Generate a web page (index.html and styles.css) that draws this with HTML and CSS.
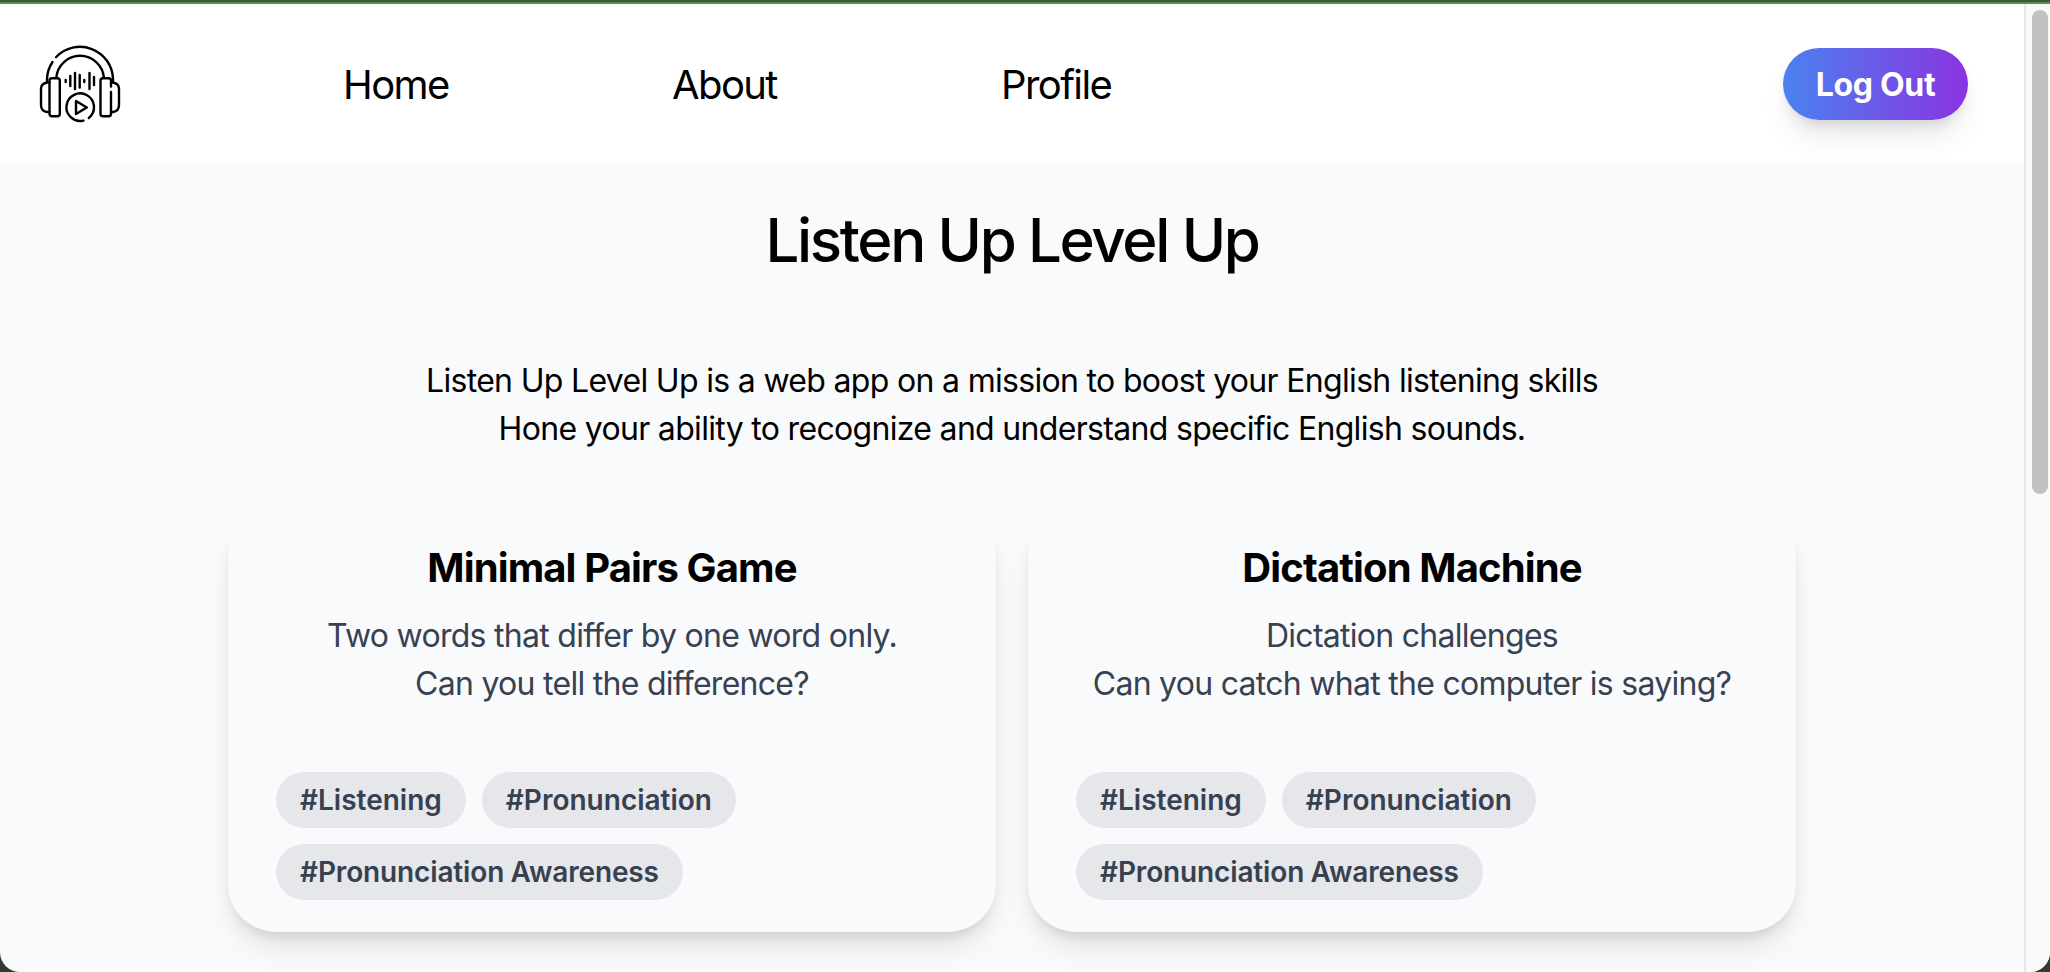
FILE: index.html
```html
<!DOCTYPE html>
<html lang="en">
<head>
<meta charset="utf-8">
<title>Listen Up Level Up</title>
<link rel="stylesheet" href="styles.css">
</head>
<body>
<div class="strip"></div>
<div class="window">
  <div class="page">
    <header class="nav">
      <svg class="logo" viewBox="0 0 120 110" fill="none" stroke="#000" stroke-width="2.4" stroke-linecap="round" stroke-linejoin="round">
        <path d="M27 51V49A33 33 0 0 1 32.500 32M36 27.200A33 33 0 0 1 93 49V51.500M36.300 47.500A23.900 23.900 0 0 1 83.900 47.500"/>
        <rect x="29.500" y="48.200" width="10.300" height="38" rx="2.500"/>
        <path d="M29.500 52.500H27Q21 53.500 21 59V75Q21 81 27 82H29.500"/>
        <path d="M91 62V84Q91 86.200 88.500 86.200H83Q80.500 86.200 80.500 84V50.500Q80.500 48.200 83 48.200H88.500Q91 48.200 91 50.500V56.500M91.500 52.500H93Q99 53.500 99 59V75Q99 81 93 82H91"/>
        <path d="M45.700 50V52M50.300 46V56M55 43V59M59.700 45V57.500M64.300 50V52M69.500 43V59M74 47V55"/>
        <path d="M63.500 90.600A13.800 13.800 0 1 1 68.800 88"/>
        <path d="M56 71V84L66.800 77.500Z"/>
      </svg>
      <nav class="links">
        <a class="link">Home</a><a class="link">About</a><a class="link">Profile</a>
      </nav>
      <button class="logout">Log Out</button>
    </header>
    <main class="main">
      <h1 class="title">Listen Up Level Up</h1>
      <p class="intro">Listen Up Level Up is a web app on a mission to boost your English listening skills<br>Hone your ability to recognize and understand specific English sounds.</p>
      <section class="cards">
        <article class="card">
          <h2 class="card-title">Minimal Pairs Game</h2>
          <p class="card-text">Two words that differ by one word only.<br>Can you tell the difference?</p>
          <div class="tags"><span class="tag">#Listening</span><span class="tag">#Pronunciation</span><span class="tag tag-long">#Pronunciation Awareness</span></div>
        </article>
        <article class="card">
          <h2 class="card-title">Dictation Machine</h2>
          <p class="card-text">Dictation challenges<br>Can you catch what the computer is saying?</p>
          <div class="tags"><span class="tag">#Listening</span><span class="tag">#Pronunciation</span><span class="tag tag-long">#Pronunciation Awareness</span></div>
        </article>
      </section>
    </main>
  </div>
  <div class="scrollbar"><div class="thumb"></div></div>
</div>
</body>
</html>
```

FILE: styles.css
```css
* { box-sizing: border-box; margin: 0; padding: 0; }
body {
  height: 972px;
  overflow: hidden;
  display: flex;
  flex-direction: column;
  background: #2f3b33;
  color: #000;
  font-family: Inter, "Liberation Sans", sans-serif;
}
.strip { flex: none; height: 4px; background: #38602f; border-bottom: 2px solid #5f8559; }
.window {
  flex: 1;
  min-height: 0;
  display: flex;
  overflow: hidden;
  background: #f9fafc;
  border-radius: 0 0 20px 20px;
}
.page { flex: 1; overflow: hidden; }
.nav {
  height: 160px;
  padding: 0 56px 0 20px;
  display: flex;
  align-items: center;
  background: #fff;
}
.logo { width: 120px; height: 110px; flex: none; margin-top: 2px; }
.links { flex: 1; display: flex; padding: 2px 0 0 203px; }
.link { width: 329px; font-size: 40px; line-height: 56px; letter-spacing: -1.6px; }
.logout {
  height: 72px;
  width: 185px;
  padding-top: 2px;
  border: 0;
  border-radius: 36px;
  background: linear-gradient(to right, #4a82f0, #8b33e0);
  box-shadow: 0 20px 30px -6px rgba(0,0,0,.1), 0 8px 12px -4px rgba(0,0,0,.1);
  color: #fff;
  font: 700 32px/48px Inter, "Liberation Sans", sans-serif;
  letter-spacing: -0.3px;
}
.main { height: 808px; padding-top: 40px; text-align: center; }
.title { font-size: 60px; line-height: 72px; font-weight: 500; letter-spacing: -2.35px; }
.intro { margin-top: 81px; font-size: 32px; line-height: 48px; letter-spacing: -0.68px; }
.cards { margin: 55px auto 0; width: 1568px; display: grid; grid-template-columns: 1fr 1fr; gap: 32px; }
.card {
  height: 424px;
  padding: 32px 48px;
  border-radius: 48px;
  box-shadow: 0 20px 30px -6px rgba(0,0,0,.1), 0 8px 12px -4px rgba(0,0,0,.1);
}
.card-title { margin-bottom: 16px; font-size: 40px; line-height: 56px; font-weight: 700; letter-spacing: -0.87px; }
.card-text { color: #374151; font-size: 32px; line-height: 48px; letter-spacing: -0.72px; }
.tags { margin-top: 64px; display: flex; flex-wrap: wrap; gap: 16px; }
.tag {
  padding: 8px 24px;
  border-radius: 28px;
  background: #e5e7eb;
  color: #374151;
  font-size: 28px;
  line-height: 40px;
  font-weight: 600;
}
.tag-long { letter-spacing: -0.14px; word-spacing: -0.5px; }
.scrollbar { width: 26px; padding: 6px 2px 0 6px; border-left: 2px solid #e8e8e8; background: #fafafa; }
.thumb { width: 16px; height: 484px; border-radius: 8px; background: #c1c1c1; }
```
